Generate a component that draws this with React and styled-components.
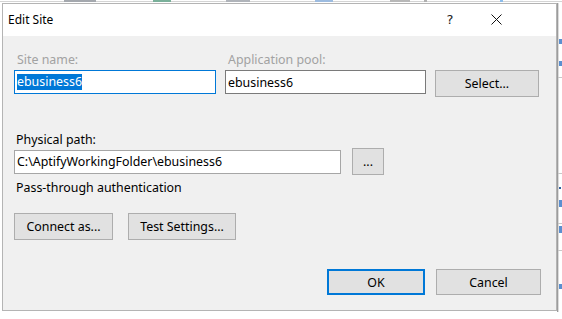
import React from 'react';
import styled, { createGlobalStyle } from 'styled-components';

const Global = createGlobalStyle`
  html, body { margin: 0; padding: 0; background: #fff; }
  body {
    font-family: "Noto Sans", "Open Sans", sans-serif;
    font-size: 12.4px;
    color: #000;
  }
  #root { width: 562px; height: 319px; overflow: hidden; }
`;

const Page = styled.div`
  width: 562px;
  height: 319px;
  display: flex;
  flex-direction: column;
  background: #fff;
`;

const BackdropTop = styled.svg`
  display: block;
  flex: none;
`;

const Main = styled.div`
  display: flex;
  align-items: flex-start;
  flex: 1;
  padding-left: 2px;
`;

const Dialog = styled.div`
  box-sizing: border-box;
  width: 555px;
  height: 308px;
  border: 1px solid #b4b4b4;
  display: flex;
  flex-direction: column;
  background: #f0f0f0;
`;

const TitleBar = styled.div`
  height: 32px;
  flex: none;
  background: #fff;
  display: flex;
  align-items: center;
  padding: 0 37px 0 5px;
`;

const Title = styled.div`
  flex: 1;
  font-size: 12px;
  line-height: 16px;
  margin-top: -1px;
`;

const CaptionButton = styled.div`
  width: 46px;
  height: 32px;
  display: flex;
  align-items: center;
  justify-content: center;
  font-family: "DejaVu Sans", "Noto Sans", sans-serif;
  font-size: 13px;
  color: #222;
  margin-top: -1px;
`;

const Body = styled.div`
  flex: 1;
  display: flex;
  flex-direction: column;
  padding: 16px 15px 0 11px;
`;

const TopGrid = styled.div`
  display: grid;
  grid-template-columns: 202px 201px 104px;
  grid-template-rows: 16px auto;
  column-gap: 9px;
  row-gap: 2px;
  align-items: start;
`;

const Label = styled.div`
  line-height: 16px;
  padding-left: ${(p) => p.$indent ?? 2}px;
  color: ${(p) => (p.$disabled ? '#a2a2a2' : '#000')};
  margin-top: ${(p) => p.$top ?? 0}px;
  white-space: nowrap;
`;

const Field = styled.div`
  box-sizing: border-box;
  width: ${(p) => (p.$w ? `${p.$w}px` : 'auto')};
  height: 24px;
  background: #fff;
  border: 1px solid ${(p) => p.$border};
  padding-left: 2px;
  display: flex;
  align-items: center;
  white-space: nowrap;
  overflow: hidden;
`;

const Selected = styled.span`
  background: #0078d7;
  color: #fff;
  line-height: 16px;
`;

const Button = styled.div`
  box-sizing: border-box;
  width: ${(p) => p.$w}px;
  height: ${(p) => p.$h ?? 27}px;
  background: #e1e1e1;
  border: ${(p) => (p.$primary ? '2px solid #0078d7' : '1px solid #adadad')};
  display: flex;
  align-items: center;
  justify-content: center;
  white-space: nowrap;
`;

const PathRow = styled.div`
  display: flex;
  align-items: center;
  gap: 11px;
`;

const ButtonRow = styled.div`
  display: flex;
  gap: ${(p) => p.$gap}px;
  margin-top: ${(p) => p.$top}px;
  justify-content: ${(p) => (p.$end ? 'flex-end' : 'flex-start')};
`;

const BackdropSide = styled.svg`
  display: block;
  flex: none;
`;

export default function App() {
  return (
    <>
      <Global />
      <Page>
        <BackdropTop width="562" height="3" viewBox="0 0 562 3">
          <rect x="0" y="0" width="562" height="3" fill="#ffffff" />
          <rect x="0" y="1" width="562" height="1" fill="#d4d4d4" />
          <rect x="64" y="0" width="32" height="2" fill="#a4a8ae" />
          <rect x="153" y="0" width="18" height="2" fill="#7ab09a" />
          <rect x="226" y="0" width="24" height="2" fill="#b0b4ba" />
          <rect x="315" y="0" width="18" height="2" fill="#9dbce0" />
          <rect x="390" y="0" width="20" height="2" fill="#b8b8b8" />
          <rect x="424" y="0" width="3" height="2" fill="#b0b0b0" />
          <rect x="500" y="0" width="3" height="2" fill="#8cbcea" />
        </BackdropTop>
        <Main>
          <Dialog>
            <TitleBar>
              <Title>Edit Site</Title>
              <CaptionButton>?</CaptionButton>
              <CaptionButton>
                <svg width="11" height="11" viewBox="0 0 11 11">
                  <path d="M0.5 0.5 L10.5 10.5 M10.5 0.5 L0.5 10.5" stroke="#111" strokeWidth="1" fill="none" />
                </svg>
              </CaptionButton>
            </TitleBar>
            <Body>
              <TopGrid>
                <Label $disabled $indent={3}>Site name:</Label>
                <Label $disabled $indent={3}>Application pool:</Label>
                <div />
                <Field $border="#0078d7">
                  <Selected>ebusiness6</Selected>
                </Field>
                <Field $border="#7a7a7a">ebusiness6</Field>
                <Button $w={104}>Select...</Button>
              </TopGrid>

              <Label $top={35}>Physical path:</Label>
              <PathRow>
                <Field $w={327} $border="#a6a6a6">C:\AptifyWorkingFolder\ebusiness6</Field>
                <Button $w={32}>...</Button>
              </PathRow>
              <Label $top={5}>Pass-through authentication</Label>

              <ButtonRow $gap={15} $top={17}>
                <Button $w={99}>Connect as...</Button>
                <Button $w={108}>Test Settings...</Button>
              </ButtonRow>

              <ButtonRow $gap={11} $top={29} $end>
                <Button $w={98} $h={26} $primary>OK</Button>
                <Button $w={105} $h={26}>Cancel</Button>
              </ButtonRow>
            </Body>
          </Dialog>
          <BackdropSide width="5" height="316" viewBox="0 0 5 316">
            <rect x="0" y="0" width="5" height="316" fill="#ffffff" />
            <rect x="0" y="0" width="1" height="309" fill="#9c9c9c" />
            <rect x="1" y="0" width="1" height="309" fill="#dcdcdc" />
            <rect x="2" y="36" width="3" height="5" fill="#5b8fd0" />
            <rect x="2" y="58" width="3" height="5" fill="#5b8fd0" />
            <rect x="1" y="74" width="4" height="1" fill="#c8c8c8" />
            <rect x="1" y="170" width="4" height="1" fill="#c8c8c8" />
            <rect x="2" y="184" width="2" height="2" fill="#2f5f9f" />
            <rect x="2" y="197" width="3" height="7" fill="#5b8fd0" />
            <rect x="1" y="220" width="4" height="1" fill="#c8c8c8" />
            <rect x="2" y="223" width="3" height="7" fill="#5b8fd0" />
            <rect x="1" y="247" width="4" height="1" fill="#c8c8c8" />
            <rect x="2" y="281" width="3" height="5" fill="#5b8fd0" />
          </BackdropSide>
        </Main>
      </Page>
    </>
  );
}
